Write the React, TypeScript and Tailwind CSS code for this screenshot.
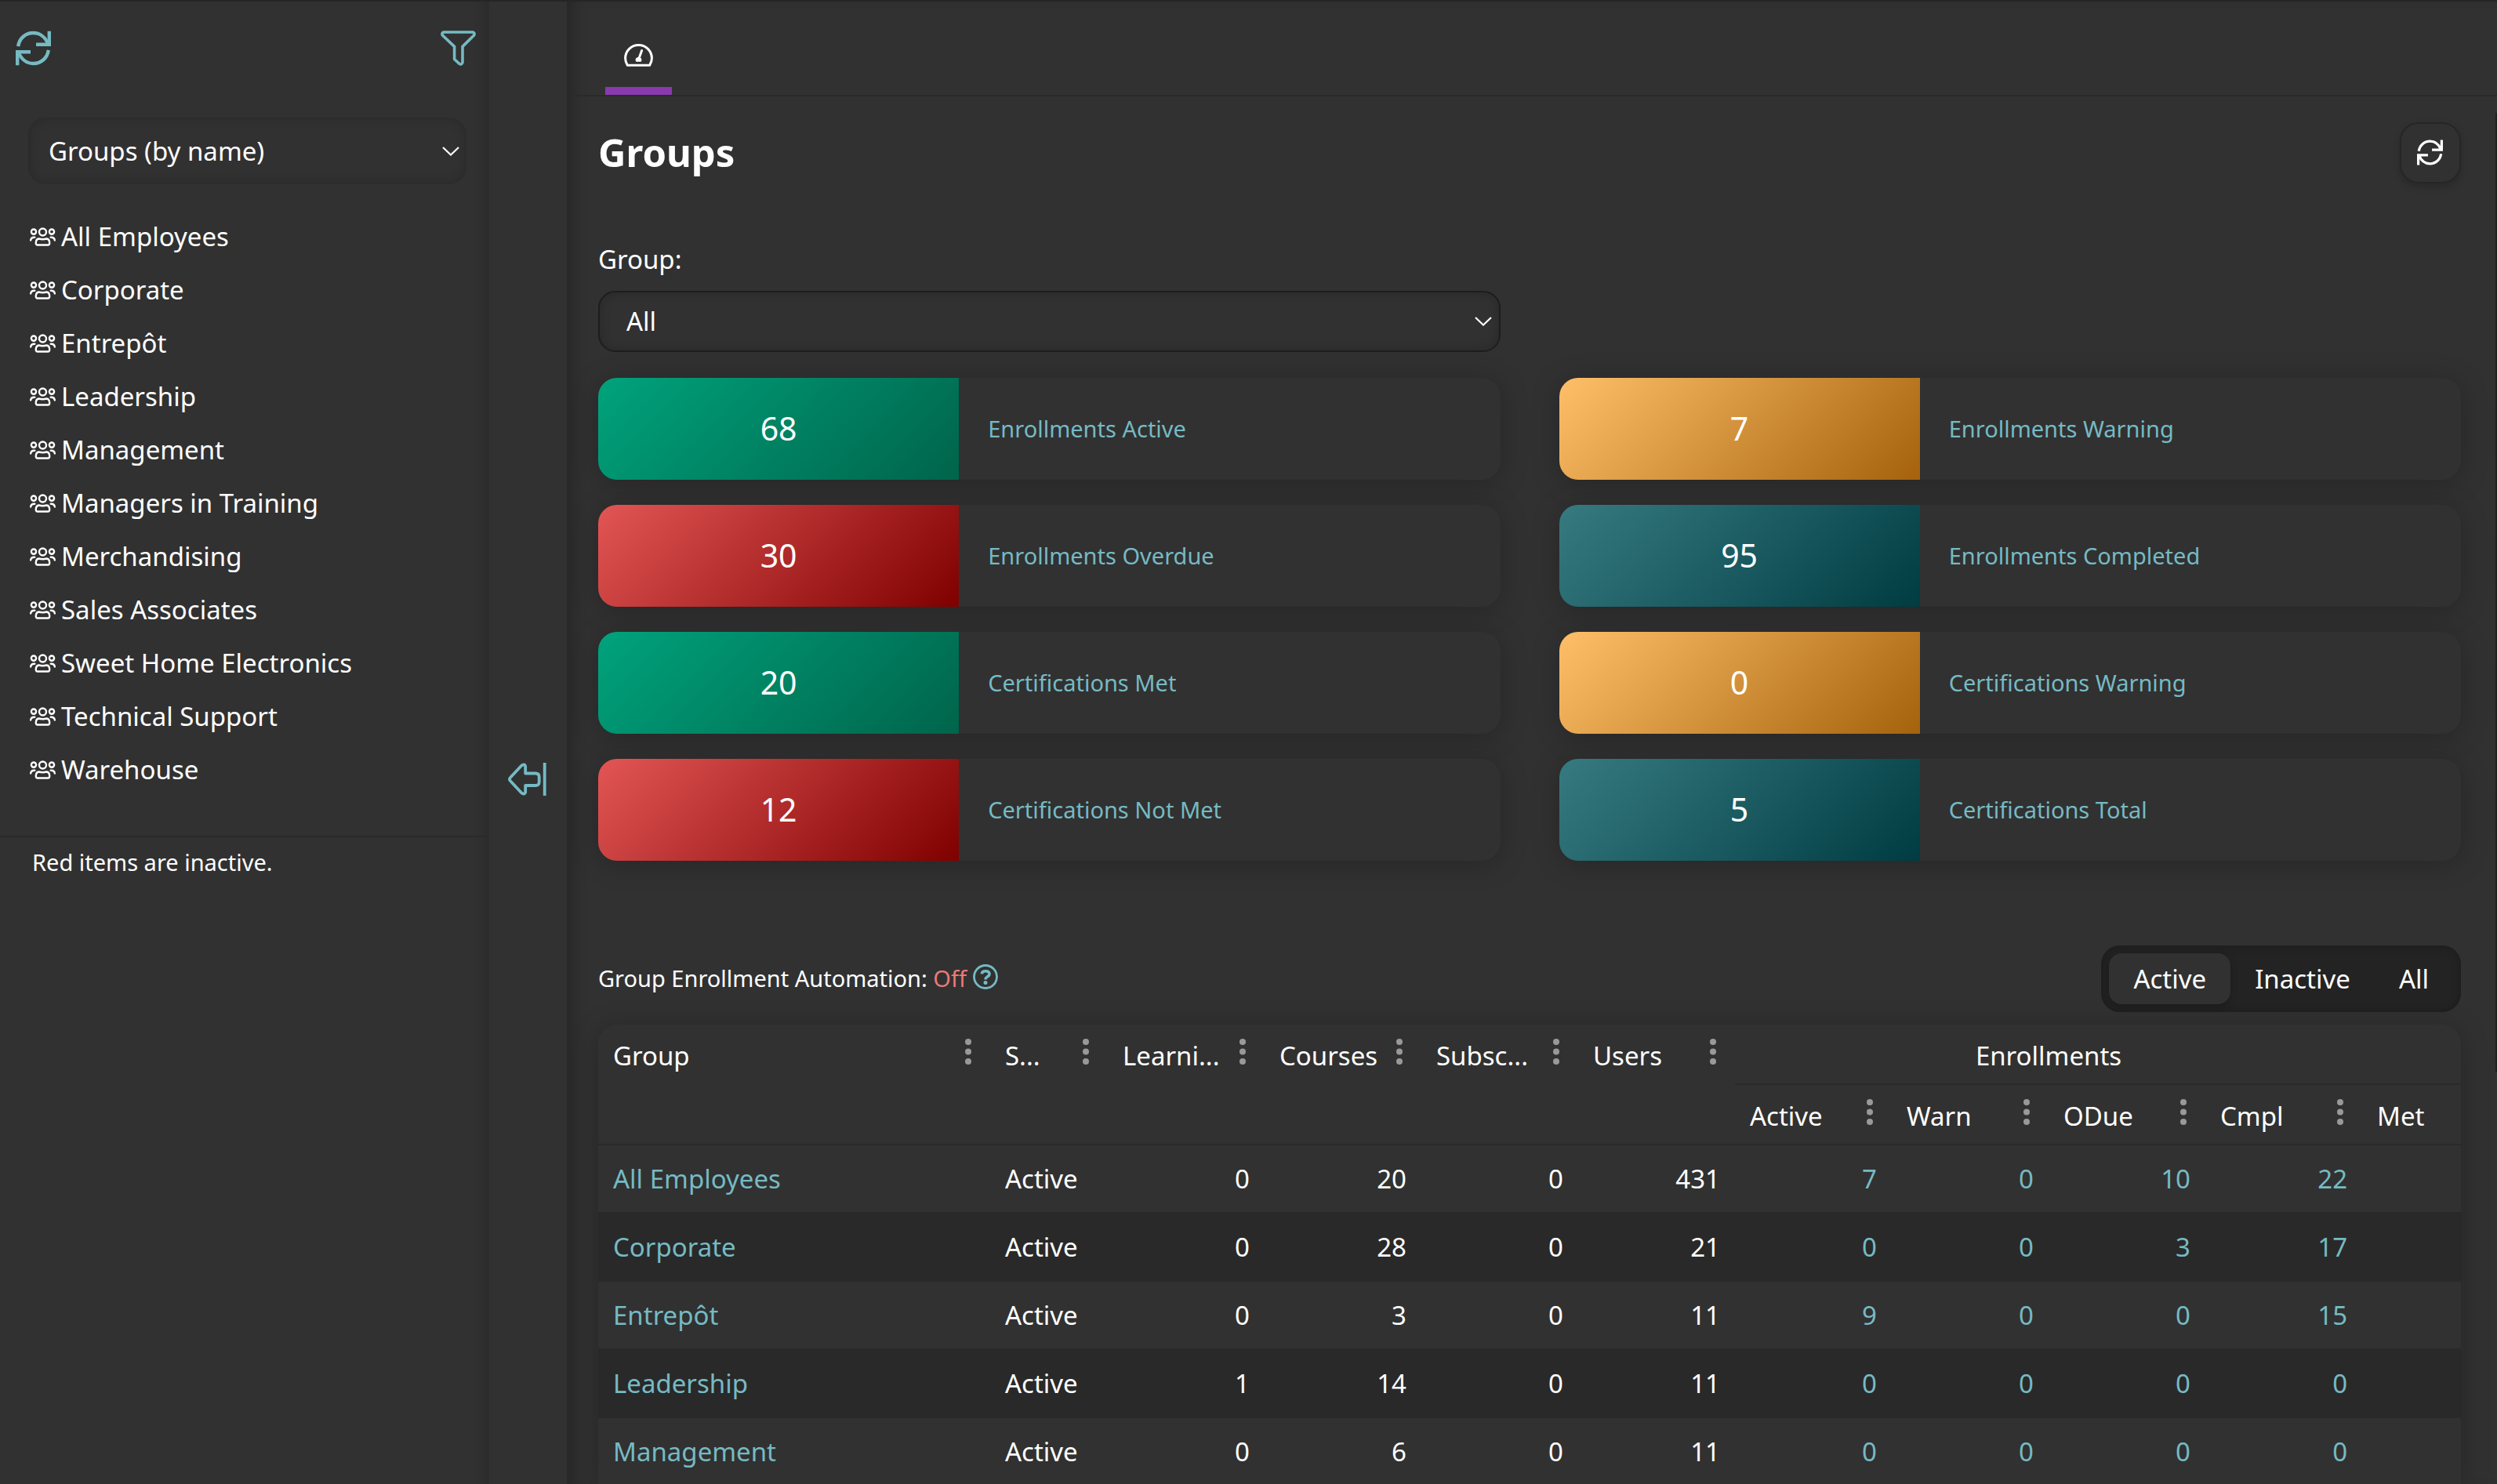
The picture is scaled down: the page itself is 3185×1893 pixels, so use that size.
import React from 'react';
import clsx from 'clsx';

const sidebarGroups = [
    'All Employees',
    'Corporate',
    'Entrepôt',
    'Leadership',
    'Management',
    'Managers in Training',
    'Merchandising',
    'Sales Associates',
    'Sweet Home Electronics',
    'Technical Support',
    'Warehouse',
];

const gradients = {
    green: 'bg-[linear-gradient(135deg,#00a37c,#00644b)]',
    orange: 'bg-[linear-gradient(135deg,#ffbf69,#a5620c)]',
    red: 'bg-[linear-gradient(135deg,#e25655,#7f0000)]',
    teal: 'bg-[linear-gradient(135deg,#367b81,#003c42)]',
};

interface Stat {
    value: number;
    label: string;
    tone: keyof typeof gradients;
}

const stats: Stat[] = [
    { value: 68, label: 'Enrollments Active', tone: 'green' },
    { value: 7, label: 'Enrollments Warning', tone: 'orange' },
    { value: 30, label: 'Enrollments Overdue', tone: 'red' },
    { value: 95, label: 'Enrollments Completed', tone: 'teal' },
    { value: 20, label: 'Certifications Met', tone: 'green' },
    { value: 0, label: 'Certifications Warning', tone: 'orange' },
    { value: 12, label: 'Certifications Not Met', tone: 'red' },
    { value: 5, label: 'Certifications Total', tone: 'teal' },
];

const mainColumns = ['Group', 'S...', 'Learni...', 'Courses', 'Subsc...', 'Users'];
const enrollmentColumns = ['Active', 'Warn', 'ODue', 'Cmpl'];

const rows = [
    { name: 'All Employees', status: 'Active', counts: [0, 20, 0, 431], enrollments: [7, 0, 10, 22] },
    { name: 'Corporate', status: 'Active', counts: [0, 28, 0, 21], enrollments: [0, 0, 3, 17] },
    { name: 'Entrepôt', status: 'Active', counts: [0, 3, 0, 11], enrollments: [9, 0, 0, 15] },
    { name: 'Leadership', status: 'Active', counts: [1, 14, 0, 11], enrollments: [0, 0, 0, 0] },
    { name: 'Management', status: 'Active', counts: [0, 6, 0, 11], enrollments: [0, 0, 0, 0] },
];

function RefreshIcon({ className }: { className?: string }) {
    return (
        <svg viewBox="0 0 45 44" fill="none" stroke="currentColor" strokeWidth="4.4" className={className}>
            <path d="M3.2 19.6C4.5 9.5 12.6 2.5 22.5 2.5C31 2.5 38 8 41.5 17" />
            <path d="M42.8 0.3V17.3H26" />
            <path d="M41.8 24.4C40.5 34.5 32.4 41.5 22.5 41.5C14 41.5 7 36 3.5 27" />
            <path d="M2.2 43.7V26.7H19" />
        </svg>
    );
}

function FilterIcon() {
    return (
        <svg viewBox="0 0 45 45" fill="none" stroke="currentColor" strokeWidth="3.6" strokeLinejoin="round" className="w-[45px] h-[45px]">
            <path d="M4 2H41Q44 3 42.6 6L28 20.4V40.5Q27 44.5 23.5 42L17.6 36.5V20.4L2.4 6Q1 3 4 2Z" />
        </svg>
    );
}

function UsersIcon() {
    return (
        <svg viewBox="0 0 33 24" fill="none" stroke="currentColor" strokeWidth="2.4" strokeLinecap="round" className="w-[33px] h-[24px] shrink-0">
            <circle cx="16.5" cy="6" r="4.5" />
            <circle cx="5" cy="5.6" r="3.1" />
            <circle cx="28" cy="5.6" r="3.1" />
            <path d="M11.5 14.5Q16.5 16 21.5 14.5Q25 15 25.2 19.5Q25.4 22.5 23 22.5H10Q7.6 22.5 7.8 19.5Q8 15 11.5 14.5Z" />
            <path d="M1.2 16.5Q1.5 12.5 6.3 12.8M31.8 16.5Q31.5 12.5 26.7 12.8" />
        </svg>
    );
}

function CollapseIcon() {
    return (
        <svg viewBox="0 0 49 42" fill="none" stroke="currentColor" strokeWidth="3.8" strokeLinejoin="round" className="w-[49px] h-[42px]">
            <path d="M2.6 19.3L17.5 3.3Q21.5 0.8 22.2 4.5V13.5H35Q39.7 13.5 39.7 18V24.5Q39.7 29 35 29H22.2V37.5Q21.5 41.2 17.5 38.7L2.6 22.7Q1.3 21 2.6 19.3Z" />
            <path d="M46.7 0V42" />
        </svg>
    );
}

function GaugeIcon() {
    return (
        <svg viewBox="0 0 37 29" fill="none" stroke="currentColor" strokeWidth="3" strokeLinejoin="round" className="w-[37px] h-[29px]">
            <path d="M4.4 27.3C2.5 24.5 1.6 21.5 1.6 18.3C1.6 8.8 9.2 1.5 18.5 1.5C27.8 1.5 35.4 8.8 35.4 18.3C35.4 21.5 34.5 24.5 32.6 27.3Z" />
            <path d="M22.6 8.5L19.2 18" strokeLinecap="round" />
            <path d="M16.2 21.3V19.5Q18.5 16.8 20.8 19.5V21.3Z" />
        </svg>
    );
}

function HelpIcon() {
    return (
        <svg viewBox="0 0 32 32" fill="none" stroke="currentColor" className="w-8 h-8">
            <circle cx="16" cy="16" r="14.5" strokeWidth="2.8" />
            <path d="M11.3 12.3C11.5 10 13.3 8.8 16 8.8C19 8.8 21 10.2 21 12.5C21 14.5 19.8 15.3 18 16.2C16.6 17 16 17.7 16 19.5" strokeWidth="3.6" />
            <circle cx="16" cy="23.6" r="2.5" fill="currentColor" stroke="none" />
        </svg>
    );
}

function Chevron({ className }: { className?: string }) {
    return (
        <svg viewBox="0 0 22 12" fill="none" stroke="currentColor" strokeWidth="2.2" className={clsx('absolute w-[22px] h-[12px] pointer-events-none', className)}>
            <path d="M1 1L11 10.5L21 1" />
        </svg>
    );
}

function ColumnHeader({ label }: { label: string }) {
    return (
        <div className="flex items-start justify-between pl-[19px] pr-6 pt-[18px] h-[75px]">
            <span className="leading-[44px] whitespace-nowrap">{label}</span>
            <button type="button" aria-label={`${label} column menu`} className="text-[#999999]">
                <svg viewBox="0 0 8 33" fill="currentColor" className="w-2 h-[33px]">
                    <circle cx="4" cy="4" r="4" />
                    <circle cx="4" cy="16.5" r="4" />
                    <circle cx="4" cy="29" r="4" />
                </svg>
            </button>
        </div>
    );
}

function StatCard({ value, label, tone }: Stat) {
    return (
        <div className="flex h-[130px] rounded-[24px] overflow-hidden bg-[#313131] shadow-[0_4px_36px_rgba(0,0,0,0.22)]">
            <div className={clsx('w-2/5 pb-0.5 flex items-center justify-center text-[41px]', gradients[tone])}>{value}</div>
            <a href="#" className="flex-1 flex items-center pb-px pl-[37px] text-[29px] text-[#76bac3]">
                {label}
            </a>
        </div>
    );
}

function Sidebar() {
    return (
        <aside className="w-[623px] shrink-0 shadow-[inset_-12px_0_16px_-8px_rgba(0,0,0,0.15)]">
            <div className="flex justify-between pl-5 pr-4 pt-[37px] text-[#76bac3]">
                <button type="button" aria-label="Refresh groups">
                    <RefreshIcon className="w-[45px] h-[45px]" />
                </button>
                <button type="button" aria-label="Filter groups">
                    <FilterIcon />
                </button>
            </div>

            <div className="relative mt-[66px] ml-9 mr-7">
                <select
                    aria-label="Group view"
                    className="appearance-none w-full h-[85px] pl-6 rounded-[22px] border-2 border-[#2c2c2c] bg-[#313131] shadow-[inset_0_0_14px_rgba(0,0,0,0.14)]"
                >
                    <option>Groups (by name)</option>
                </select>
                <Chevron className="right-[9px] top-[37px]" />
            </div>

            <ul className="mt-[33px] pl-[38px]">
                {sidebarGroups.map((name) => (
                    <li key={name}>
                        <a href="#" className="flex items-center gap-[7px] h-[68px]">
                            <UsersIcon />
                            {name}
                        </a>
                    </li>
                ))}
            </ul>

            <p className="mt-[50px] pt-3 pl-[41px] border-t-2 border-[#2a2a2a] text-[29px] leading-[40px]">Red items are inactive.</p>
        </aside>
    );
}

function GroupsTable() {
    return (
        <div className="mt-4 rounded-t-[24px] overflow-hidden bg-[#313131] shadow-[0_4px_36px_rgba(0,0,0,0.22)]">
            <table className="table-fixed w-[2450px] border-separate border-spacing-0">
                <colgroup>
                    <col className="w-[500px]" />
                    <col className="w-[150px]" />
                    <col span={9} className="w-[200px]" />
                </colgroup>
                <thead>
                    <tr>
                        {mainColumns.map((label) => (
                            <th key={label} rowSpan={2} className="p-0 align-top text-left font-normal border-b-2 border-[#2a2a2a]">
                                <ColumnHeader label={label} />
                            </th>
                        ))}
                        <th colSpan={4} className="px-0 pt-[18px] pb-0 h-[77px] align-top font-normal border-b-2 border-[#2a2a2a]">
                            Enrollments
                        </th>
                        <td className="p-0 border-b-2 border-[#2a2a2a]" />
                    </tr>
                    <tr>
                        {[...enrollmentColumns, 'Met'].map((label) => (
                            <th key={label} className="p-0 text-left font-normal border-b-2 border-[#2a2a2a]">
                                <ColumnHeader label={label} />
                            </th>
                        ))}
                    </tr>
                </thead>
                <tbody>
                    {rows.map((row) => (
                        <tr key={row.name} className="h-[87px] even:bg-[#292929]">
                            <td className="px-[19px] py-0 border-b-2 border-[#292929]">
                                <a href="#" className="text-[#76bac3]">{row.name}</a>
                            </td>
                            <td className="px-[19px] py-0 border-b-2 border-[#292929]">{row.status}</td>
                            {row.counts.map((count, i) => (
                                <td key={i} className="px-[19px] py-0 text-right border-b-2 border-[#292929]">{count}</td>
                            ))}
                            {row.enrollments.map((count, i) => (
                                <td key={i} className="px-[19px] py-0 text-right border-b-2 border-[#292929]">
                                    <a href="#" className="text-[#76bac3]">{count}</a>
                                </td>
                            ))}
                            <td className="border-b-2 border-[#292929]" />
                        </tr>
                    ))}
                </tbody>
            </table>
        </div>
    );
}

export default function App() {
    return (
        <div className="relative flex h-screen overflow-hidden border-t-2 border-[#252525] bg-[#313131] text-white text-[33px] leading-[44px] font-['Noto_Sans',sans-serif]">
            <Sidebar />

            <div className="w-[100px] shrink-0 flex items-center justify-center border-l border-[#2d2d2d]">
                <button type="button" aria-label="Collapse sidebar" className="mt-[92px] mr-0.5 text-[#76bac3]">
                    <CollapseIcon />
                </button>
            </div>

            <main className="flex-1 min-w-0 shadow-[inset_18px_0_18px_-10px_rgba(0,0,0,0.22)]">
                <nav className="h-[121px] pl-[49px] border-b-2 border-[#2a2a2a]">
                    <button type="button" aria-label="Dashboard" className="w-[85px] h-[119px] pb-[26px] flex items-end justify-center border-b-10 border-[#8a3aaf]">
                        <GaugeIcon />
                    </button>
                </nav>

                <div className="pl-10 pr-[46px]">
                    <div className="flex items-start justify-between pt-[33px]">
                        <h1 className="pt-2 text-[49px] leading-[60px] font-bold">Groups</h1>
                        <button
                            type="button"
                            aria-label="Refresh"
                            className="w-[78px] h-[78px] pb-0.5 pr-px flex items-center justify-center rounded-[24px] border-2 border-[#262626] shadow-[0_4px_10px_rgba(0,0,0,0.2)]"
                        >
                            <RefreshIcon className="w-[33px] h-[33px]" />
                        </button>
                    </div>

                    <div className="mt-[75px] grid grid-cols-2 gap-x-[75px]">
                        <div>
                            <label htmlFor="group" className="block">Group:</label>
                            <div className="relative mt-[18px]">
                                <select
                                    id="group"
                                    className="appearance-none w-full h-[78px] pl-[34px] rounded-[22px] border-2 border-[#1d1d1d] bg-[#313131] shadow-[inset_0_0_14px_rgba(0,0,0,0.2)]"
                                >
                                    <option>All</option>
                                </select>
                                <Chevron className="right-[11px] top-[33px]" />
                            </div>
                        </div>
                    </div>

                    <div className="mt-[33px] grid grid-cols-2 gap-x-[75px] gap-y-8">
                        {stats.map((stat) => (
                            <StatCard key={stat.label} {...stat} />
                        ))}
                    </div>

                    <div className="mt-[108px] flex items-center justify-between">
                        <div className="flex items-start gap-2 pb-px text-[29px] leading-[40px]">
                            <span>
                                Group Enrollment Automation: <span className="text-[#ea7a78]">Off</span>
                            </span>
                            <button type="button" aria-label="Help" className="mt-0.5 text-[#76bac3]">
                                <HelpIcon />
                            </button>
                        </div>
                        <div className="flex p-[10px] rounded-[24px] bg-[#232323] shadow-[inset_0_0_12px_rgba(0,0,0,0.25)]">
                            <button type="button" className="h-[65px] px-[31px] rounded-[16px] bg-[#313131] shadow-[0_2px_8px_rgba(0,0,0,0.25)]">Active</button>
                            <button type="button" className="h-[65px] px-[31px]">Inactive</button>
                            <button type="button" className="h-[65px] px-[31px]">All</button>
                        </div>
                    </div>

                    <GroupsTable />
                </div>
            </main>

            {/* scrollbar thumb */}
            <div className="absolute right-0 top-[7.5%] h-[64.7%] w-0.5 bg-[#1f1f1f]" />
        </div>
    );
}
